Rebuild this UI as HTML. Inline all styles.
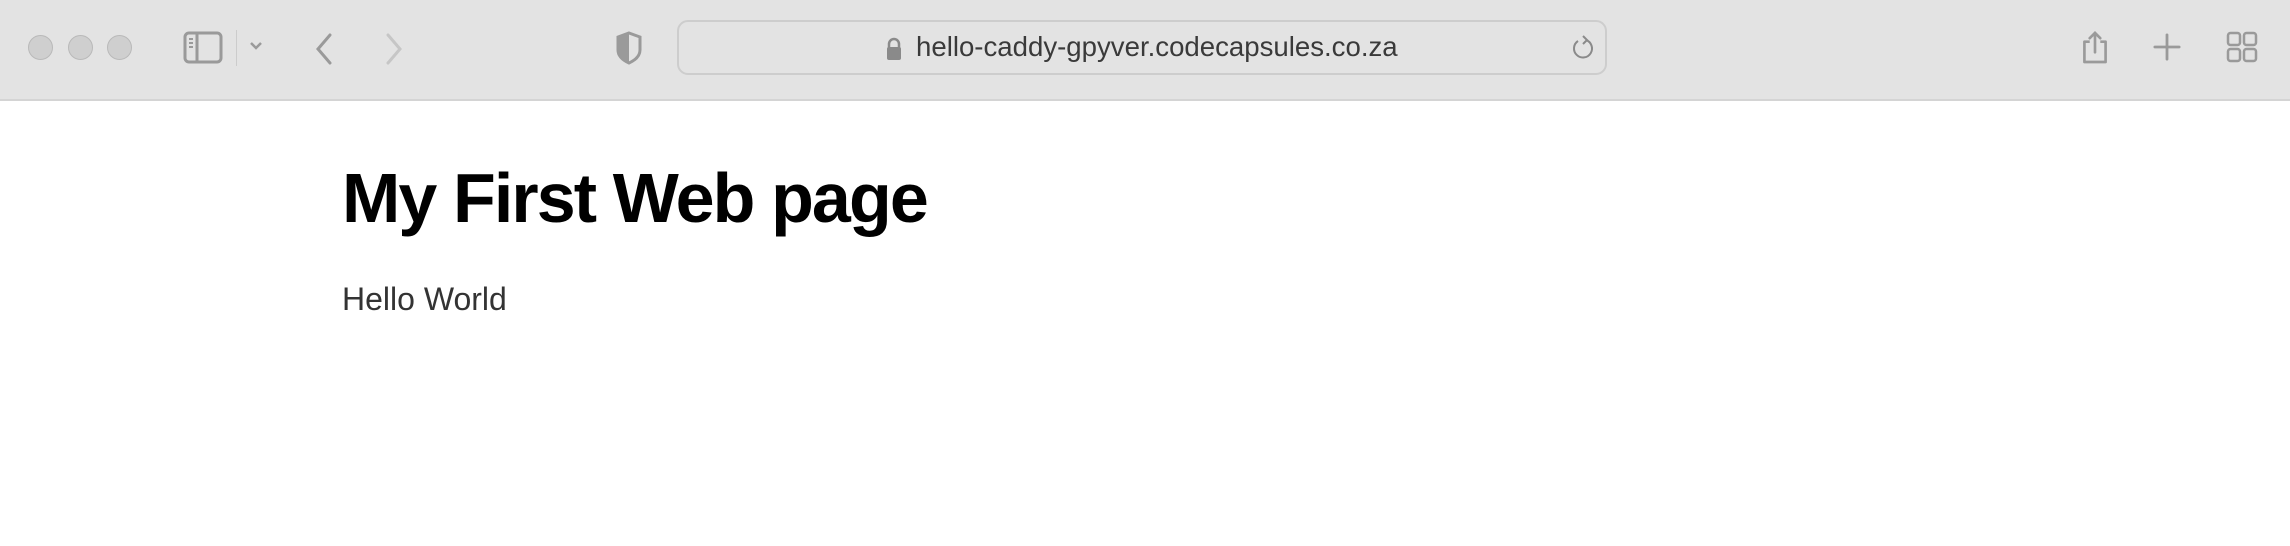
<!DOCTYPE html>
<html><head><meta charset="utf-8"><style>
*{margin:0;padding:0;box-sizing:border-box}
body{width:2290px;height:546px;background:#fff;overflow:hidden;font-family:"Liberation Sans",sans-serif;position:relative}
.bar{position:absolute;left:0;top:0;width:2290px;height:101px;background:#e3e3e3;border-bottom:2px solid #d4d4d4}
.tl{position:absolute;top:35px;width:25px;height:25px;border-radius:50%;background:#cfcfcf;border:1px solid #b9b9b9}
svg{position:absolute}
.url{position:absolute;left:677px;top:20px;width:930px;height:55px;border:2px solid #cdcdcd;border-radius:11px;background:#e3e3e3}
.utext{position:absolute;left:916px;top:31px;font-size:27.6px;color:#3a3a3a}
h1{position:absolute;left:342px;top:158px;font-size:70px;font-weight:bold;letter-spacing:-1.9px;color:#000;line-height:80px}
p{position:absolute;left:342px;top:281px;font-size:32px;color:#333;line-height:36px}
</style></head><body>
<div class="bar">
<div class="tl" style="left:28px"></div>
<div class="tl" style="left:68px"></div>
<div class="tl" style="left:107px"></div>
<svg style="left:183px;top:31px" width="40" height="34" viewBox="0 0 40 34"><rect x="2" y="2" width="36" height="29" rx="4" fill="none" stroke="#9a9a9a" stroke-width="3"/><line x1="14" y1="2" x2="14" y2="31" stroke="#9a9a9a" stroke-width="3"/><line x1="6" y1="8" x2="10" y2="8" stroke="#9a9a9a" stroke-width="2"/><line x1="6" y1="12" x2="10" y2="12" stroke="#9a9a9a" stroke-width="2"/><line x1="6" y1="16" x2="10" y2="16" stroke="#9a9a9a" stroke-width="2"/></svg>
<div style="position:absolute;left:236px;top:30px;width:1px;height:36px;background:#ccc"></div>
<svg style="left:249px;top:40px" width="14" height="12" viewBox="0 0 14 12"><path d="M2 3 L7 8 L12 3" fill="none" stroke="#9a9a9a" stroke-width="2.5"/></svg>
<svg style="left:312px;top:32px" width="24" height="34" viewBox="0 0 24 34"><path d="M18 3 L6 17 L18 31" fill="none" stroke="#9a9a9a" stroke-width="3" stroke-linecap="round"/></svg>
<svg style="left:382px;top:32px" width="24" height="34" viewBox="0 0 24 34"><path d="M6 3 L18 17 L6 31" fill="none" stroke="#c6c6c6" stroke-width="3" stroke-linecap="round"/></svg>
<svg style="left:614px;top:30px" width="30" height="36" viewBox="0 0 30 36"><path d="M15 3 L26 7 L26 20 Q26 28 15 33 Q4 28 4 20 L4 7 Z" fill="none" stroke="#9a9a9a" stroke-width="3"/><path d="M15 3 L4 7 L4 20 Q4 28 15 33 Z" fill="#9a9a9a"/></svg>
<div class="url"></div>
<svg style="left:885px;top:36px" width="18" height="26" viewBox="0 0 18 26"><path d="M4 12 V8 a5 5 0 0 1 10 0 V12" fill="none" stroke="#8a8a8a" stroke-width="2.5"/><rect x="2" y="11" width="14" height="13" rx="2" fill="#8a8a8a"/></svg>
<div class="utext">hello-caddy-gpyver.codecapsules.co.za</div>
<svg style="left:1570px;top:34px" width="26" height="28" viewBox="0 0 26 28"><path d="M16 6 A9 9 0 1 1 8 7" fill="none" stroke="#8a8a8a" stroke-width="2"/><path d="M13 2 L17 6 L13 10" fill="none" stroke="#8a8a8a" stroke-width="2"/></svg>
<svg style="left:2080px;top:28px" width="30" height="38" viewBox="0 0 34 40"><path d="M11 14 H5 V37 H29 V14 H23" fill="none" stroke="#9a9a9a" stroke-width="3" stroke-linejoin="round"/><path d="M17 26 V4 M11 10 L17 4 L23 10" fill="none" stroke="#9a9a9a" stroke-width="3" stroke-linecap="round"/></svg>
<svg style="left:2153px;top:33px" width="28" height="28" viewBox="0 0 30 30"><path d="M15 2 V28 M2 15 H28" stroke="#9a9a9a" stroke-width="3" stroke-linecap="round"/></svg>
<svg style="left:2226px;top:31px" width="32" height="32" viewBox="0 0 32 32"><rect x="2" y="2" width="12" height="12" rx="2.5" fill="none" stroke="#9a9a9a" stroke-width="2.5"/><rect x="18" y="2" width="12" height="12" rx="2.5" fill="none" stroke="#9a9a9a" stroke-width="2.5"/><rect x="2" y="18" width="12" height="12" rx="2.5" fill="none" stroke="#9a9a9a" stroke-width="2.5"/><rect x="18" y="18" width="12" height="12" rx="2.5" fill="none" stroke="#9a9a9a" stroke-width="2.5"/></svg>
</div>
<h1>My First Web page</h1>
<p>Hello World</p>
</body></html>
